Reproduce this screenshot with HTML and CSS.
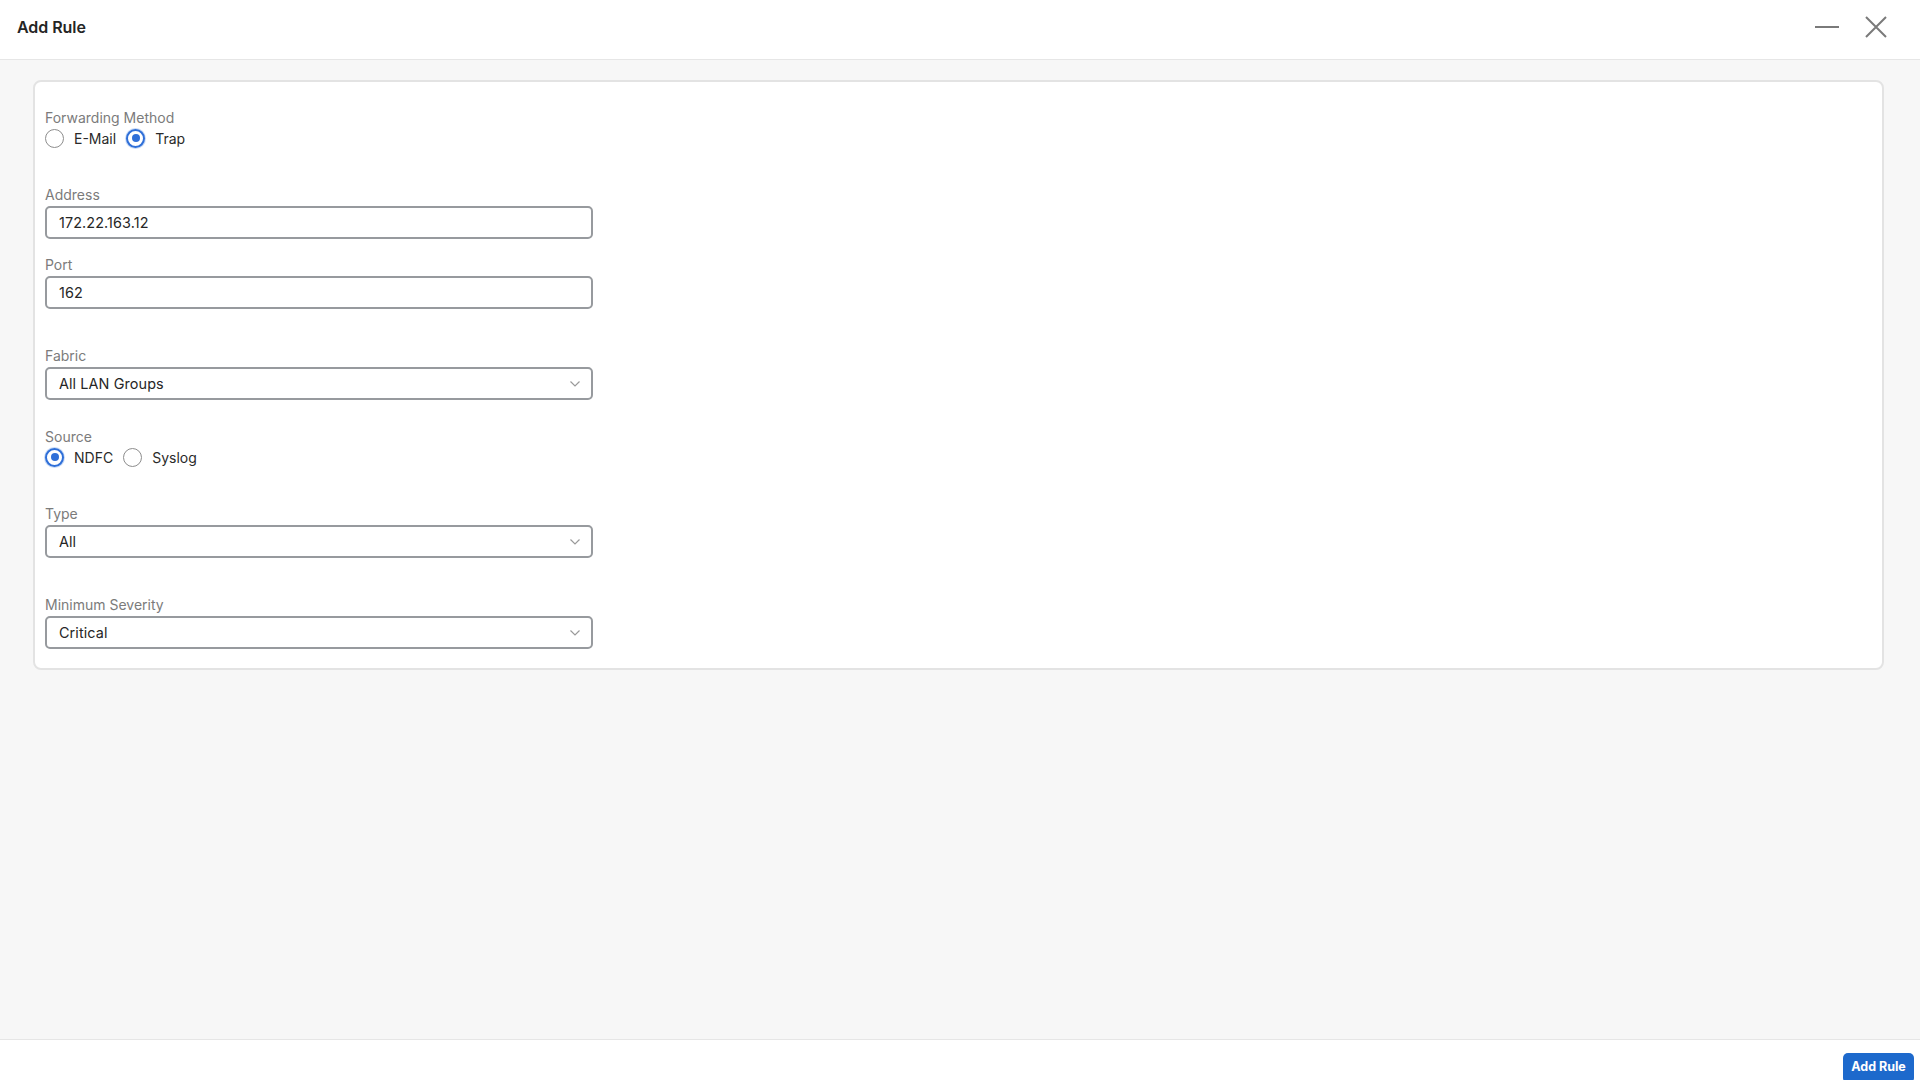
FILE: index.html
```html
<!DOCTYPE html>
<html lang="en">
<head>
<meta charset="utf-8">
<title>Add Rule</title>
<link rel="stylesheet" href="styles.css">
</head>
<body>
<div class="page">
  <header class="header">
    <h1 class="title">Add Rule</h1>
    <div class="window-actions">
      <button class="icon-btn" aria-label="Minimize">
        <svg width="28" height="28" viewBox="0 0 28 28"><line x1="2" y1="14" x2="26" y2="14" stroke="#7a7a7a" stroke-width="2"/></svg>
      </button>
      <button class="icon-btn" aria-label="Close">
        <svg width="24" height="24" viewBox="0 0 24 24"><path d="M2 2 L22 22 M22 2 L2 22" stroke="#7a7a7a" stroke-width="2" fill="none"/></svg>
      </button>
    </div>
  </header>

  <main class="main">
    <section class="card">
      <div class="group">
        <div class="label">Forwarding Method</div>
        <div class="radio-row">
          <label class="radio"><span class="dot"></span><span>E-Mail</span></label>
          <label class="radio checked"><span class="dot"></span><span>Trap</span></label>
        </div>
      </div>

      <div class="group g-address">
        <div class="label">Address</div>
        <div class="control">172.22.163.12</div>
      </div>

      <div class="group g-port">
        <div class="label">Port</div>
        <div class="control">162</div>
      </div>

      <div class="group g-fabric">
        <div class="label">Fabric</div>
        <div class="control select">All LAN Groups
          <svg class="chev" width="10" height="6" viewBox="0 0 10 6"><path d="M0.5 0.5 L5 5 L9.5 0.5" stroke="#9a9a9a" stroke-width="1.2" fill="none"/></svg>
        </div>
      </div>

      <div class="group g-source">
        <div class="label">Source</div>
        <div class="radio-row">
          <label class="radio checked"><span class="dot"></span><span>NDFC</span></label>
          <label class="radio"><span class="dot"></span><span>Syslog</span></label>
        </div>
      </div>

      <div class="group g-type">
        <div class="label">Type</div>
        <div class="control select">All
          <svg class="chev" width="10" height="6" viewBox="0 0 10 6"><path d="M0.5 0.5 L5 5 L9.5 0.5" stroke="#9a9a9a" stroke-width="1.2" fill="none"/></svg>
        </div>
      </div>

      <div class="group g-sev">
        <div class="label">Minimum Severity</div>
        <div class="control select">Critical
          <svg class="chev" width="10" height="6" viewBox="0 0 10 6"><path d="M0.5 0.5 L5 5 L9.5 0.5" stroke="#9a9a9a" stroke-width="1.2" fill="none"/></svg>
        </div>
      </div>
    </section>
  </main>

  <footer class="footer">
    <button class="primary">Add Rule</button>
  </footer>
</div>
</body>
</html>
```

FILE: styles.css
```css
* { box-sizing: border-box; }

html, body {
  margin: 0;
  padding: 0;
  height: 100%;
  overflow: hidden;
}

body {
  font-family: Inter, "Noto Sans", "Liberation Sans", sans-serif;
  color: #2a2a2a;
  background: #f7f7f7;
}

.page {
  display: flex;
  flex-direction: column;
  height: 100vh;
}

.header {
  height: 60px;
  flex: none;
  background: #ffffff;
  border-bottom: 1px solid #e6e6e6;
  display: flex;
  align-items: center;
  justify-content: space-between;
  padding: 0 32px 0 17px;
}

.title {
  margin: 0;
  font-size: 16px;
  font-weight: 600;
  color: #252525;
  letter-spacing: -0.05px;
  padding-bottom: 6px;
}

.window-actions {
  display: flex;
  align-items: center;
  gap: 23px;
  padding-bottom: 6px;
}

.icon-btn {
  border: 0;
  background: none;
  padding: 0;
  display: flex;
}

.main {
  flex: 1;
  padding: 20px 36px 0 33px;
  background: #f7f7f7;
}

.card {
  background: #ffffff;
  border: 2px solid #e3e3e3;
  border-radius: 8px;
  padding: 28px 10px 19px 10px;
}

.group {
  display: flex;
  flex-direction: column;
  align-items: flex-start;
}

.g-address { margin-top: 39px; }
.g-port { margin-top: 18px; }
.g-fabric { margin-top: 39px; }
.g-source { margin-top: 29px; }
.g-type { margin-top: 39px; }
.g-sev { margin-top: 39px; }

.label {
  font-size: 14px;
  line-height: 16px;
  color: #7b7b7b;
}

.control {
  margin-top: 3px;
  width: 548px;
  height: 33px;
  border: 2px solid #979a9e;
  border-radius: 5px;
  padding: 0 11px 0 12px;
  font-size: 14.4px;
  letter-spacing: 0.1px;
  color: #262626;
  display: flex;
  align-items: center;
  justify-content: space-between;
}

.chev { margin-right: 0; }

.radio-row {
  margin-top: 2px;
  height: 20px;
  display: flex;
  align-items: center;
  gap: 10px;
}

.radio {
  display: flex;
  align-items: center;
  gap: 10px;
  font-size: 14px;
  color: #2a2a2a;
}

.dot {
  width: 19px;
  height: 19px;
  border-radius: 50%;
  border: 1.5px solid #8d8d8d;
  background: #ffffff;
  display: flex;
  align-items: center;
  justify-content: center;
}

.radio.checked .dot {
  border: 2px solid #2f6fd8;
  box-shadow: 0 0 0 1px #c9dbf6;
}

.radio.checked .dot::after {
  content: "";
  width: 8px;
  height: 8px;
  border-radius: 50%;
  background: #2f6fd8;
}

.footer {
  height: 41px;
  flex: none;
  background: #ffffff;
  border-top: 1px solid #e6e6e6;
  display: flex;
  justify-content: flex-end;
  align-items: flex-start;
  padding: 13px 6px 0 0;
  overflow: hidden;
}

.primary {
  height: 30px;
  width: 71px;
  border: 0;
  border-radius: 5px;
  background: #1d69cc;
  color: #ffffff;
  font-family: Inter, "Noto Sans", "Liberation Sans", sans-serif;
  font-size: 12.5px;
  font-weight: 700;
  padding: 0 0 4px 0;
}
```
